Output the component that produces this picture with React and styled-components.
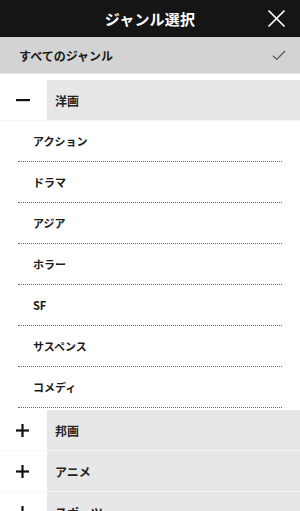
import React from "react";
import styled, { createGlobalStyle } from "styled-components";

const Global = createGlobalStyle`
  html, body { margin: 0; padding: 0; background: #fff; }
  body { font-family: "Noto Sans CJK JP", "Noto Sans", sans-serif; }
  * { box-sizing: border-box; }
`;

const Screen = styled.div`
  width: 300px;
  height: 511px;
  overflow: hidden;
  background: #fff;
`;

const Header = styled.header`
  height: 37px;
  background: #151515;
  display: flex;
  align-items: center;
  justify-content: center;
  position: relative;
`;

const Title = styled.h1`
  margin: 0;
  color: #fff;
  font-size: 15px;
  font-weight: 700;
  letter-spacing: 0.2px;
`;

const CloseButton = styled.button`
  position: absolute;
  right: 14px;
  top: 9px;
  width: 19px;
  height: 19px;
  padding: 0;
  border: 0;
  background: none;
  display: flex;
`;

const AllRow = styled.div`
  height: 37px;
  background: #d3d3d3;
  border-bottom: 1px solid #e6e6e6;
  display: flex;
  align-items: center;
  justify-content: space-between;
  padding: 0 14px 0 19px;
  font-size: 12px;
  font-weight: 700;
  color: #1a1a1a;
`;

const List = styled.div`
  padding-top: 6px;
`;

const CategoryRow = styled.div`
  display: flex;
  height: 41px;
  border-bottom: 1px solid #f5f5f5;
`;

const Toggle = styled.div`
  width: 47px;
  display: flex;
  align-items: center;
  justify-content: flex-start;
  padding-left: 16px;
  background: #fff;
`;

const CategoryLabel = styled.div`
  flex: 1;
  background: #e7e7e7;
  display: flex;
  align-items: center;
  padding-left: 8px;
  font-size: 12px;
  font-weight: 700;
  color: #222;
`;

const SubList = styled.div`
  padding: 0 18px 2px 18px;
`;

const SubItem = styled.div`
  height: 41px;
  display: flex;
  align-items: center;
  padding-left: 15px;
  font-size: 11px;
  font-weight: 700;
  color: #1a1a1a;
  border-bottom: 1px dotted #666;
`;

const Minus = () => (
  <svg width="14" height="14" viewBox="0 0 14 14">
    <rect x="0" y="6" width="14" height="2.2" fill="#111" />
  </svg>
);

const Plus = () => (
  <svg width="13" height="13" viewBox="0 0 13 13">
    <rect x="0" y="5.4" width="13" height="2.2" fill="#111" />
    <rect x="5.4" y="0" width="2.2" height="13" fill="#111" />
  </svg>
);

const categories = [
  { name: "洋画", open: true, items: ["アクション", "ドラマ", "アジア", "ホラー", "SF", "サスペンス", "コメディ"] },
  { name: "邦画", open: false, items: [] },
  { name: "アニメ", open: false, items: [] },
  { name: "スポーツ", open: false, items: [] },
];

export default function App() {
  return (
    <>
      <Global />
      <Screen>
        <Header>
          <Title>ジャンル選択</Title>
          <CloseButton aria-label="close">
            <svg width="19" height="19" viewBox="0 0 19 19">
              <path d="M1.5 1.5 L17.5 17.5 M17.5 1.5 L1.5 17.5" stroke="#fff" strokeWidth="1.7" fill="none" />
            </svg>
          </CloseButton>
        </Header>
        <AllRow>
          <span>すべてのジャンル</span>
          <svg width="14" height="11" viewBox="0 0 14 11">
            <path d="M1 5.8 L4.8 9.5 L13 1" stroke="#555" strokeWidth="1.2" fill="none" />
          </svg>
        </AllRow>
        <List>
          {categories.map((c) => (
            <React.Fragment key={c.name}>
              <CategoryRow>
                <Toggle>{c.open ? <Minus /> : <Plus />}</Toggle>
                <CategoryLabel>{c.name}</CategoryLabel>
              </CategoryRow>
              {c.open && (
                <SubList>
                  {c.items.map((i) => (
                    <SubItem key={i}>{i}</SubItem>
                  ))}
                </SubList>
              )}
            </React.Fragment>
          ))}
        </List>
      </Screen>
    </>
  );
}
